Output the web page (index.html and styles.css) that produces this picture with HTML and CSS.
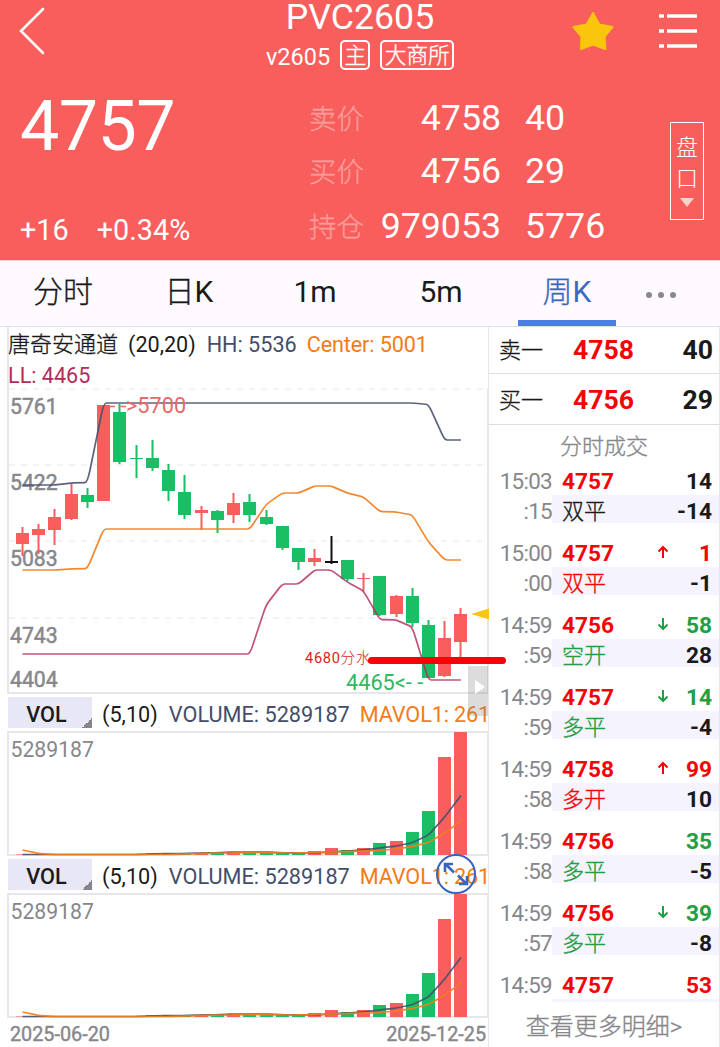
FILE: index.html
```html
<!DOCTYPE html>
<html lang="zh-CN">
<head>
  <meta charset="UTF-8" />
  <meta name="viewport" content="width=device-width, initial-scale=1.0"/>
  <title>PVC2605</title>
  <link rel="stylesheet" href="styles.css">
</head>
<body>
  <header>
    <div class="topbar">
      <svg class="back" width="28" height="50" viewBox="0 0 28 50"><path d="M25 3 L3 25 L25 47" /></svg>
      <div class="title">
        <h1>PVC2605</h1>
        <div class="sub"><span>v2605</span><span class="tag cjk">主</span><span class="tag cjk">大商所</span></div>
      </div>
      <svg class="star" width="44" height="42" viewBox="0 0 44 42"><path d="M22 3 L28.3 14.6 L41.5 17 L33.5 26.6 L34.5 39 L22 34.6 L10 39 L10.5 26.6 L2.5 17 L15.7 14.6 Z" /></svg>
      <svg class="menu" width="40" height="36" viewBox="0 0 40 36"><path d="M1 3h5M9 3h30M1 18h5M9 18h30M1 33h5M9 33h30" /></svg>
    </div>
    <div class="quote">
      <div class="last">
        <div class="price">4757</div>
        <div class="change"><span>+16</span><span>+0.34%</span></div>
      </div>
      <div class="book">
        <label class="cjk">卖价</label><b>4758</b><i>40</i>
        <label class="cjk">买价</label><b>4756</b><i>29</i>
        <label class="cjk">持仓</label><b>979053</b><i>5776</i>
      </div>
      <div class="pankou cjk">
        <span>盘</span><span>口</span>
        <svg width="14" height="9" viewBox="0 0 14 9"><path d="M0 0h14L7 9z" /></svg>
      </div>
    </div>
  </header>

  <nav>
    <a class="cjk">分时</a>
    <a><span class="cjk">日</span>K</a>
    <a>1m</a>
    <a>5m</a>
    <a class="active"><span class="cjk">周</span>K</a>
    <a class="more"><s></s><s></s><s></s></a>
  </nav>

  <main>
    <section class="charts">
      <div class="legend">
        <div><span class="cjk">唐奇安通道</span><span class="par">(20,20)</span><span class="hh">HH: 5536</span><span class="mid">Center: 5001</span></div>
        <div class="ll">LL: 4465</div>
      </div>
      <svg id="kline" width="482" height="306" viewBox="7 388 482 306"></svg>
      <div class="vol-head">
        <span class="vol">VOL</span><span>(5,10)</span><span class="hh">VOLUME: 5289187</span><span class="mid">MAVOL1: 261</span>
      </div>
      <svg class="volume" width="482" height="125" viewBox="7 731 482 125"></svg>
      <div class="vol-head">
        <span class="vol">VOL</span><span>(5,10)</span><span class="hh">VOLUME: 5289187</span><span class="mid">MAVOL1: 261</span>
        <svg class="expand" width="42" height="42" viewBox="0 0 42 42">
          <circle cx="21" cy="21" r="19" />
          <path d="M19 19.5 L11 11.5 M10 19 V11 H18 M23 22.5 L31 30.5 M32 23 V31 H24" />
        </svg>
      </div>
      <svg class="volume" width="482" height="125" viewBox="7 731 482 125"></svg>
      <div class="dates"><span>2025-06-20</span><span>2025-12-25</span></div>
      <div class="drawer"><svg width="12" height="16" viewBox="0 0 12 16"><path d="M1 1 L11 8 L1 15z" /></svg></div>
      <div class="support"><span>4680<em class="cjk">分水</em></span><hr></div>
    </section>

    <aside>
      <div class="level"><span class="cjk">卖一</span><b>4758</b><strong>40</strong></div>
      <div class="level"><span class="cjk">买一</span><b>4756</b><strong>29</strong></div>
      <h2 class="cjk">分时成交</h2>
      <div id="trades"></div>
      <div class="all cjk">查看更多明细&gt;</div>
    </aside>
  </main>

  <script>
    // [high, low, bodyTop, bodyBottom, color]
    const candles = [
      [527, 556, 533, 544, "r"], [524, 554, 529, 535, "r"], [509, 545, 517, 530, "r"], [484, 520, 494, 519, "r"],
      [488, 508, 495, 502, "g"], [405, 501, 405, 501, "r"], [404, 464, 412, 462, "g"], [445, 478, 458, 459, "g"],
      [440, 471, 458, 468, "g"], [464, 501, 470, 491, "g"], [475, 519, 492, 515, "g"], [506, 530, 510, 513, "r"],
      [510, 533, 511, 520, "g"], [493, 523, 503, 515, "r"], [494, 522, 502, 515, "g"], [510, 525, 517, 524, "g"],
      [526, 550, 526, 548, "g"], [548, 570, 548, 562, "g"], [549, 566, 558, 562, "r"], [536, 564, 561, 563, "k"],
      [560, 581, 560, 579, "g"], [573, 591, 578, 579, "r"], [576, 616, 576, 615, "g"], [595, 617, 596, 614, "r"],
      [588, 627, 596, 623, "g"], [620, 678, 625, 678, "g"], [621, 677, 638, 676, "r"], [608, 657, 614, 642, "r"]
    ];
    const hh = [485, 485, 485, 483, 482.5, 403, 403, 403, 403, 403, 403, 403, 403, 403, 403, 403, 403, 403, 403, 403, 403, 403, 403, 403, 403, 404.5, 440, 440];
    const mid = [570, 570, 570, 569, 568.5, 529, 529, 529, 529, 529, 529, 529, 529, 529, 529, 504.5, 493, 493, 486, 486, 493, 497, 511.5, 512, 515, 542, 560, 560];
    const ll = [654, 654, 654, 654, 654, 654, 654, 654, 654, 654, 654, 654, 654, 654, 654, 605, 584, 584, 570, 570, 582, 591, 619.5, 620, 627, 680, 680, 680];

    const volTop = [854.5, 854.5, 854.5, 854.5, 854.5, 854.5, 854.5, 854.5, 853, 853, 853, 853, 852.5, 852, 852.5, 853, 853, 853, 851, 848, 850, 848, 843, 841, 832, 811, 757, 732];
    const ma5 = [854.5, 854.5, 854.5, 854.5, 854.5, 854.5, 854.5, 854.5, 854, 853.5, 853.5, 853, 852.7, 852, 852, 852, 852.7, 853, 853, 852, 851, 850, 848, 846, 842.7, 835, 817, 795.5];
    const ma10 = [850, 853.5, 854.5, 854.5, 854.5, 854.5, 854.5, 854.5, 854.5, 854.5, 854, 853.5, 853, 853, 852.7, 852.7, 853, 853, 852.5, 852, 851.5, 851, 850.5, 849, 846.5, 842.5, 833, 821];

    const x = i => 22.5 + 16.24 * i;

    // polyline with slightly rounded corners
    function line(ys, cls) {
      let d = `M${x(0)} ${ys[0]}`;
      for (let i = 1; i < ys.length - 1; i++) {
        const k = 0.16;
        const ax = x(i) - 16.24 * k, ay = ys[i] + (ys[i - 1] - ys[i]) * k;
        const bx = x(i) + 16.24 * k, by = ys[i] + (ys[i + 1] - ys[i]) * k;
        d += `L${ax} ${ay}Q${x(i)} ${ys[i]} ${bx} ${by}`;
      }
      d += `L${x(ys.length - 1)} ${ys[ys.length - 1]}`;
      return `<path class="line ${cls}" d="${d}" />`;
    }

    let k = `<path class="grid" d="M9 389H485M9 465H485M9 541H485M9 618H485" />
      <path class="frame" d="M8 388V693H488V388" />`;
    [[5761, 414], [5422, 490], [5083, 566], [4743, 643], [4404, 687]].forEach(a => {
      k += `<text class="axis" x="10" y="${a[1]}">${a[0]}</text>`;
    });
    candles.forEach((c, i) => {
      const left = Math.round(x(i) - 6.5);
      k += `<g class="${c[4]}"><rect x="${left + 5.5}" y="${c[0]}" width="2" height="${c[1] - c[0]}" />
        <rect x="${left}" y="${c[2]}" width="13" height="${c[3] - c[2]}" /></g>`;
    });
    k += line(hh, "hh-line") + line(mid, "mid-line") + line(ll, "ll-line");
    k += `<path class="hi-dash" d="M109.5 406.5H115M120.5 406.5H126" />
      <text class="hi" x="126" y="413">&gt;5700</text>
      <text class="lo" x="346" y="690">4465&lt;- -</text>
      <path class="marker" d="M471 614L489 608.5V619.5z" />`;
    document.getElementById("kline").innerHTML = k;

    let v = `<path class="frame" d="M8 732V855H488V732z" /><text class="axis thin" x="10.5" y="757">5289187</text>`;
    volTop.forEach((t, i) => {
      v += `<rect class="${candles[i][4] === "k" ? "r" : candles[i][4]}" x="${Math.round(x(i) - 6.5)}" y="${t}" width="13" height="${855 - t}" />`;
    });
    v += line(ma5, "hh-line") + line(ma10, "mid-line");
    document.querySelectorAll(".volume").forEach(el => el.innerHTML = v);

    // [time, sec, price, arrow, qty, qtyColor, type, typeColor, delta]
    const trades = [
      ["15:03", ":15", 4757, "", 14, "", "双平", "", "-14"],
      ["15:00", ":00", 4757, "up", 1, "red", "双平", "red", "-1"],
      ["14:59", ":59", 4756, "down", 58, "green", "空开", "green", "28"],
      ["14:59", ":59", 4757, "down", 14, "green", "多平", "green", "-4"],
      ["14:59", ":58", 4758, "up", 99, "red", "多开", "red", "10"],
      ["14:59", ":58", 4756, "", 35, "green", "多平", "green", "-5"],
      ["14:59", ":57", 4756, "down", 39, "green", "多平", "green", "-8"],
      ["14:59", "", 4757, "", 53, "red", "", "", ""]
    ];
    const arrows = {
      up: "M6 13V2M1.5 6.5L6 2L10.5 6.5",
      down: "M6 1V12M1.5 7.5L6 12L10.5 7.5"
    };
    document.getElementById("trades").innerHTML = trades.map(t => `
      <div class="trade">
        <time>${t[0]}</time>
        <div class="deal"><b>${t[2]}</b>${t[3] ? `<svg class="${t[3]}" width="12" height="14" viewBox="0 0 12 14"><path d="${arrows[t[3]]}" /></svg>` : ""}<strong class="${t[5]}">${t[4]}</strong></div>
        <time class="sec">${t[1]}</time>
        <div class="kind"><span class="cjk ${t[7]}">${t[6]}</span><strong>${t[8]}</strong></div>
      </div>`).join("");
  </script>
</body>
</html>
```
FILE: styles.css
```css
:root {
  --red: #f85e5c;
  --green: #19be65;
  --navy: #434e6b;
  --orange: #f57b17;
  --line: #e5e7eb;
  --grey: #87878b;
}
* {
  margin: 0; padding: 0; box-sizing: border-box;
  font-style: normal;
}
body {
  width: 720px;
  height: 1047px;
  overflow: hidden;
  background: #fff;
  color: #1a1a1a;
  font-family: Roboto, "Noto Sans CJK SC", sans-serif;
}
.cjk {
  font-weight: 300;
  -webkit-text-stroke: .35px currentColor;
}
header {
  height: 260px;
  background: var(--red);
  color: #fff;
}
.topbar {
  display: grid;
  grid-template-columns: 200px 320px 107px 93px;
  height: 80px;
}
.topbar path {
  fill: none;
  stroke: #fff;
}
.back {
  margin: 6px 0 0 18px;
}
.back path {
  stroke-width: 2.6;
  stroke-linecap: round;
}
.title {
  text-align: center;
}
h1 {
  font-size: 35.7px;
  line-height: 34px;
  font-weight: 400;
}
.sub {
  display: flex;
  justify-content: center;
  gap: 10px;
  margin-top: 6px;
  font-size: 23.5px;
  line-height: 34px;
}
.tag {
  height: 30px;
  padding: 0 2.3px;
  border: 2px solid #fff;
  border-radius: 5px;
  font-size: 21.7px;
  line-height: 28px;
}
.topbar .star {
  margin: 10px 0 0 51px;
}
.topbar .star path {
  fill: #fac60d;
  stroke: #fac60d;
  stroke-width: 2;
  stroke-linejoin: round;
}
.menu {
  margin: 13px 0 0 31px;
}
.menu path {
  stroke-width: 3.4;
}
.quote {
  display: flex;
  height: 180px;
}
.last {
  width: 310px;
  padding-left: 20px;
}
.price {
  font-size: 70px;
  line-height: 92px;
  letter-spacing: -.6px;
}
.change {
  display: flex;
  gap: 28px;
  margin-top: 43px;
  font-size: 28.8px;
  line-height: 30px;
}
.book {
  display: grid;
  grid-template-columns: 62px 129px 1fr;
  grid-template-rows: 53px 53px 57px;
  align-items: center;
  width: 360px;
  height: 163px;
  margin-top: 11px;
  font-size: 35.7px;
}
.book label {
  margin: -2px 0 0 -1px;
  font-size: 27.5px;
  color: #fc9c9a;
}
.book b {
  font-weight: 400;
  text-align: right;
}
.book i {
  padding-left: 24px;
}
.pankou {
  display: flex;
  flex-direction: column;
  align-items: center;
  width: 34px;
  height: 98px;
  margin-top: 42px;
  padding-top: 9px;
  border: 1px solid #fff;
  font-size: 22px;
  line-height: 31px;
  -webkit-text-stroke: 0;
}
.pankou svg {
  margin-top: 4px;
  fill: #fdd0d0;
}
nav {
  display: flex;
  height: 67px;
  border-top: 1px solid #fcd0d5;
  border-bottom: 1px solid #dcdfe6;
  background: #fefaff;
  font-size: 30px;
}
nav a {
  display: flex;
  justify-content: center;
  width: 126px;
  line-height: 61px;
}
nav .active {
  width: 98px;
  margin: 0 14px;
  border-bottom: 6px solid #4a7ee8;
  color: #3d69be;
}
nav .more {
  align-items: center;
  gap: 6px;
  width: 60px;
  padding: 3px 0 0 2px;
}
nav s {
  width: 6px;
  height: 6px;
  border-radius: 50%;
  background: #8a888e;
}
main {
  display: flex;
  height: 720px;
}
.charts {
  position: relative;
  width: 489px;
  padding-left: 7px;
  border-right: 1px solid var(--line);
}
.charts > svg {
  display: block;
}
.legend {
  height: 61px;
  padding: 2px 0 0 1px;
  border-left: 2px solid var(--line);
  font-size: 21.6px;
  line-height: 31px;
  white-space: nowrap;
}
.legend .cjk {
  margin-left: -2px;
  font-size: 22px;
}
.legend .par {
  margin: 0 11px 0 10px;
}
.legend .hh {
  margin-right: 10px;
}
.hh { color: var(--navy); }
.mid { color: var(--orange); }
.legend .mid { letter-spacing: -.1px; }
.ll { color: #b32c59; margin-left: -2px; }
.grid {
  fill: none;
  stroke: #f3f3f4;
  stroke-width: 2;
  stroke-dasharray: 6 6;
}
.frame {
  fill: none;
  stroke: var(--line);
  stroke-width: 2;
}
.axis {
  font-size: 21.2px;
  fill: var(--grey);
  stroke: var(--grey);
  stroke-width: .5;
}
.axis.thin {
  stroke: none;
}
.r { fill: var(--red); }
.g { fill: var(--green); }
.k { fill: #111; }
.line {
  fill: none;
  stroke-width: 1.7;
}
.hh-line { stroke: #434e6be0; }
.mid-line { stroke: #f17d1ee8; }
.ll-line { stroke: #b32c59d0; }
.hi-dash {
  stroke: #e9686a;
  stroke-width: 1.7;
}
.hi, .lo {
  font-size: 21.7px;
  fill: #e9686a;
}
.lo { fill: #2fb865; }
.marker { fill: #f8c512; }
.vol-head {
  position: relative;
  display: flex;
  width: 481px;
  height: 37px;
  padding: 3px 0 3px 1px;
  font-size: 21.7px;
  line-height: 36px;
  white-space: nowrap;
}
.vol-head > span {
  flex-shrink: 0;
  margin-right: 11px;
}
.vol-head > .hh {
  margin-right: 10px;
}
.vol-head > .mid {
  margin: 0;
  letter-spacing: -.15px;
}
.vol-head .vol {
  width: 84px;
  margin-right: 10px;
  padding-right: 7px;
  background: linear-gradient(135deg, transparent 50%, #88868c 50%) right bottom / 10px 10px no-repeat, #e8e7f6;
  font-weight: 500;
  text-align: center;
}
.expand {
  position: absolute;
  left: 428px;
  top: -3px;
  fill: none;
  stroke: #3a64bd;
  stroke-width: 2;
}
.expand path {
  stroke-width: 2.6;
}
.dates {
  display: flex;
  justify-content: space-between;
  padding: 1px 2px 0 3px;
  font-size: 19.8px;
  line-height: 31px;
  color: var(--grey);
  -webkit-text-stroke: .4px var(--grey);
}
.drawer {
  position: absolute;
  right: 0;
  top: 339px;
  width: 20px;
  height: 50px;
  padding: 13px 0 0 6px;
  background: rgba(130,130,130,.28);
}
.drawer path {
  fill: #fff;
}
.support {
  position: absolute;
  left: 305px;
  top: 320px;
  display: flex;
  align-items: center;
  font-size: 14.6px;
  line-height: 22px;
  letter-spacing: .7px;
  color: #e01a1a;
  white-space: nowrap;
}
.support .cjk {
  -webkit-text-stroke: 0;
}
.support span {
  width: 63px;
}
.support hr {
  position: relative;
  top: 2px;
  width: 138px;
  height: 7px;
  border: none;
  border-radius: 4px;
  background: #fb0007;
}
aside {
  width: 231px;
  border-right: 1px solid var(--line);
}
.level {
  display: flex;
  align-items: center;
  height: 51px;
  padding: 1px 6px 0 10px;
  border-bottom: 1px solid #dddfe3;
  font-size: 26.6px;
}
.level:first-child {
  height: 47px;
  padding: 0 6px 1px 10px;
}
.level span {
  width: 74px;
  margin-top: -3px;
  font-size: 22px;
}
.level b {
  flex: 1;
}
aside b {
  color: #f20505;
}
h2 {
  height: 42px;
  font-size: 22px;
  line-height: 43px;
  text-align: center;
  color: var(--grey);
}
#trades {
  height: 535px;
  overflow: hidden;
}
.trade {
  display: grid;
  grid-template-columns: 63px 1fr;
  grid-template-rows: 28px 28px;
  height: 72px;
  font-size: 22.7px;
  line-height: 30px;
}
.trade time {
  font-size: 22.4px;
  letter-spacing: -.7px;
  line-height: 29px;
  color: var(--grey);
  text-align: right;
}
.trade .sec {
  line-height: 32px;
}
.deal, .kind {
  display: flex;
  align-items: center;
  padding: 0 7px 0 10px;
}
.deal b {
  width: 95px;
}
.deal strong, .kind strong {
  margin-left: auto;
}
.deal b, .deal strong {
  padding-top: 1px;
}
.kind {
  padding-top: 5px;
  background: #f5f3fd;
}
.kind .cjk {
  font-size: 22px;
}
.deal svg {
  margin-top: -2px;
  fill: none;
  stroke: #f20505;
  stroke-width: 2;
}
.deal .down {
  stroke: #249e42;
}
.red { color: #f20505; }
.green { color: #249e42; }
.all {
  font-size: 24px;
  line-height: 51px;
  text-align: center;
  color: var(--grey);
}
```
